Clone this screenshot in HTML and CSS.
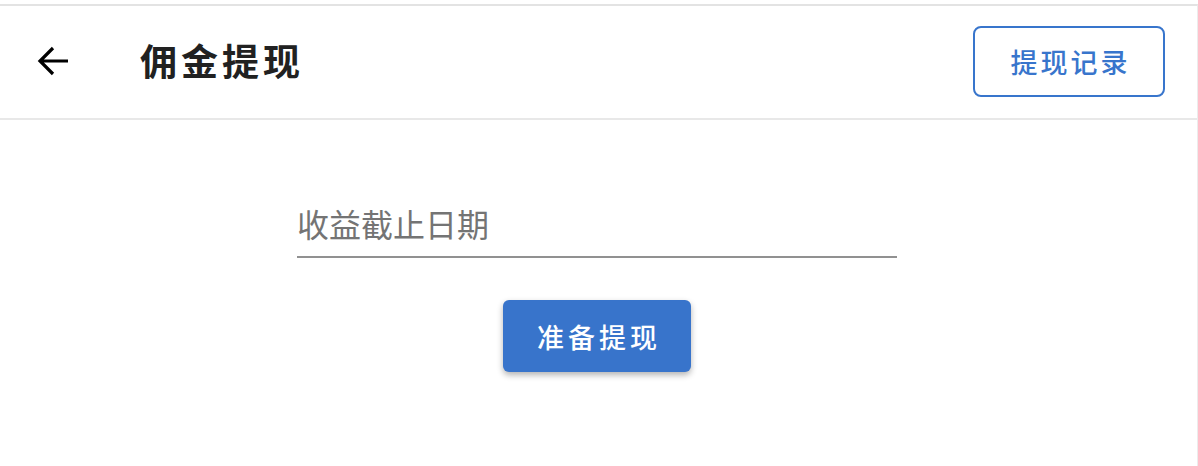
FILE: index.html
```html
<!DOCTYPE html>
<html lang="zh-CN">
  <head>
    <meta charset="UTF-8" />
    <meta name="viewport" content="width=device-width, initial-scale=1.0" />
    <title>佣金提现</title>
    <link rel="stylesheet" href="styles.css">
  </head>
  <body>
    <div class="page">
      <!-- Header -->
      <header class="topbar">
        <button class="back" aria-label="返回">
          <svg width="32" height="32" viewBox="0 0 32 32">
            <path d="M31 16H3M16 3L3 16l13 13" fill="none" stroke="#000" stroke-width="3.2" />
          </svg>
        </button>
        <h1>佣金提现</h1>
        <button class="outline-btn">提现记录</button>
      </header>

      <!-- Form -->
      <main class="content">
        <div class="field">
          <input type="text" placeholder="收益截止日期" />
        </div>
        <button class="primary-btn">准备提现</button>
      </main>
    </div>
  </body>
</html>
```

FILE: styles.css
```css
* {
  margin: 0;
  padding: 0;
  box-sizing: border-box;
  font-family: 'Noto Sans CJK SC', 'Noto Sans', sans-serif;
}

body {
  background: #fff;
  padding-top: 4px;
}

.page {
  border-top: 2px solid #e3e3e3;
  border-right: 1px solid #ececec;
  height: 462px;
}

/* Header */
.topbar {
  display: flex;
  align-items: center;
  height: 114px;
  padding: 0 32px 0 37px;
  border-bottom: 2px solid #e8e8e8;
}

.back {
  display: flex;
  width: 32px;
  height: 32px;
  border: none;
  background: none;
  cursor: pointer;
  margin-top: -2px;
}

.topbar h1 {
  flex: 1;
  margin-left: 71px;
  margin-top: -4px;
  font-size: 37px;
  font-weight: 700;
  color: #212121;
  letter-spacing: 4px;
}

.outline-btn {
  width: 192px;
  height: 71px;
  margin-top: -1px;
  border: 2px solid #3875cc;
  border-radius: 8px;
  background: #fff;
  color: #3875cc;
  font-size: 27px;
  font-weight: 500;
  letter-spacing: 3px;
  padding-left: 3px;
  cursor: pointer;
}

/* Form */
.content {
  display: flex;
  flex-direction: column;
  align-items: center;
  padding-top: 82px;
  padding-right: 3px;
}

.field {
  width: 600px;
}

.field input {
  width: 100%;
  height: 56px;
  border: none;
  border-bottom: 2px solid #919191;
  outline: none;
  font-size: 32px;
  color: #333;
  padding: 0 0 12px;
}

.field input::placeholder {
  color: #747474;
}

.primary-btn {
  width: 188px;
  height: 72px;
  margin-top: 42px;
  border: none;
  border-radius: 6px;
  background: #3874cb;
  color: #fff;
  font-size: 27px;
  font-weight: 500;
  letter-spacing: 4px;
  padding-left: 4px;
  box-shadow: 0 3px 6px rgba(0, 0, 0, 0.3);
  cursor: pointer;
}
```
